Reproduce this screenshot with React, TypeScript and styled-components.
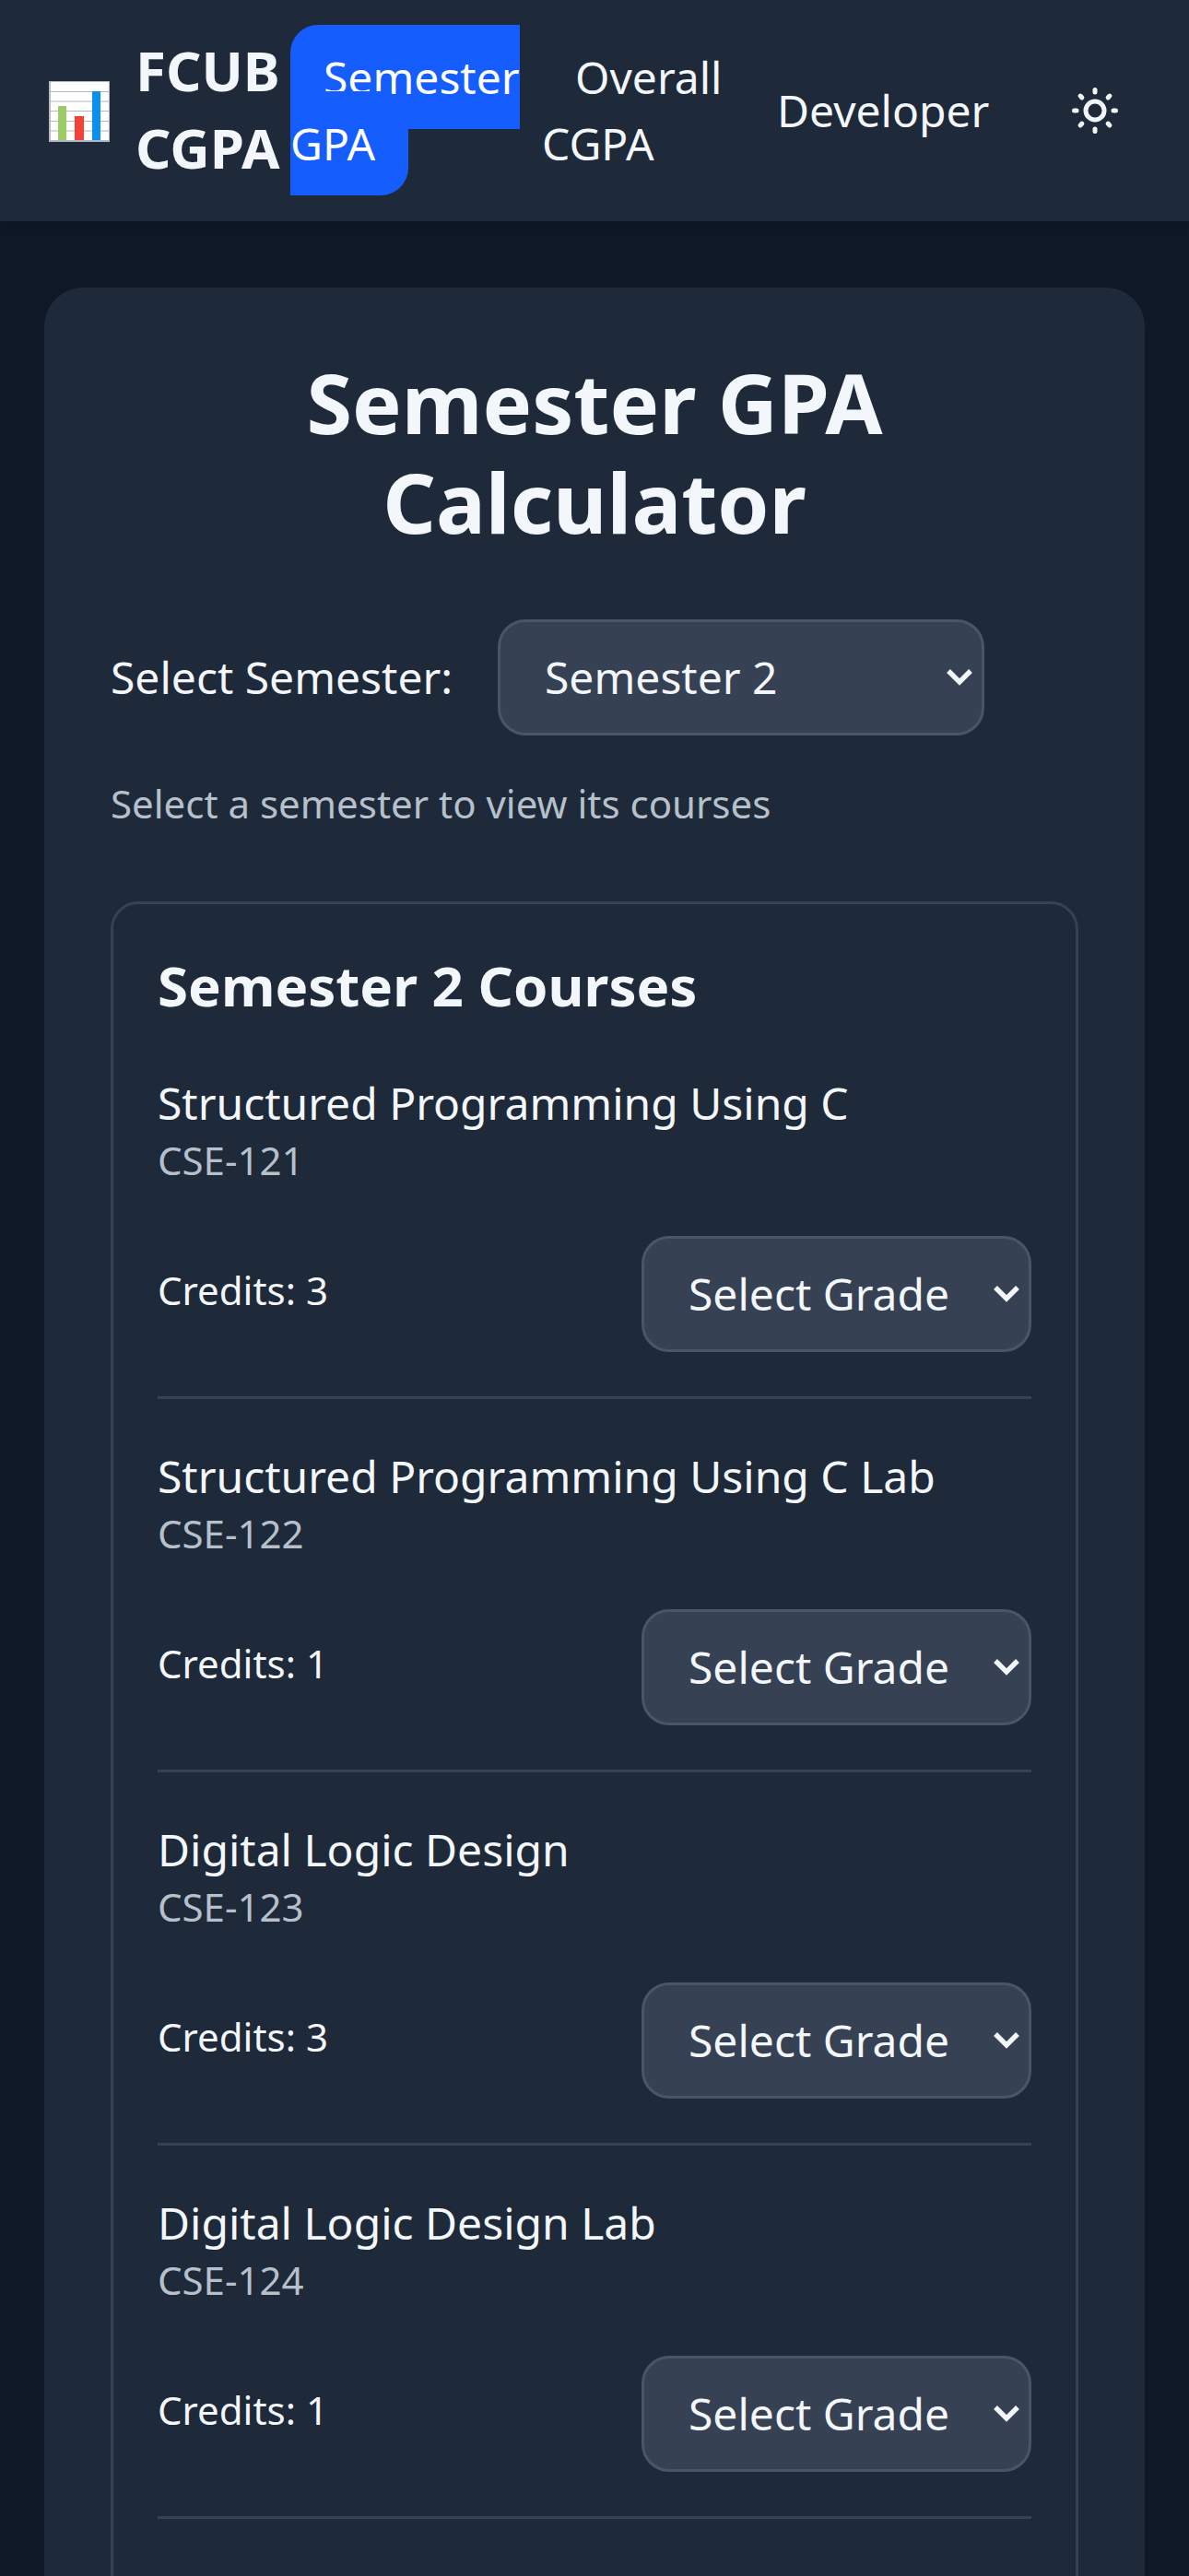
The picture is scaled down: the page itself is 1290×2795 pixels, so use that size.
import React, { useState } from "react";
import styled, { createGlobalStyle } from "styled-components";

const GlobalStyle = createGlobalStyle`
  *, *::before, *::after { box-sizing: border-box; }
  html, body { margin: 0; padding: 0; background: #0e1826; }
  body {
    font-family: "Noto Sans", "Open Sans", sans-serif;
    font-size: 48px;
    line-height: 72px;
    color: #f3f6fa;
  }
  h1, h2, p, ul { margin: 0; padding: 0; }
`;

const Page = styled.div`
  height: 2795px;
  overflow: hidden;
`;

const Header = styled.header`
  display: flex;
  align-items: center;
  justify-content: space-between;
  height: 240px;
  padding: 0 48px;
  background: #1e2939;
  box-shadow: 0 3px 9px rgba(0, 0, 0, 0.1);
`;

const Brand = styled.div`
  display: flex;
  align-items: center;
  width: 267px;
`;

const Logo = styled.svg`
  flex: none;
  width: 66px;
  height: 66px;
  margin: 2px 28px 0 5px;
`;

const BrandName = styled.span`
  width: 168px;
  padding-bottom: 4px;
  font-size: 60px;
  line-height: 84px;
  font-weight: 700;
`;

const Nav = styled.nav`
  display: flex;
  align-items: center;
  justify-content: space-between;
  flex: 1;
`;

const NavList = styled.ul`
  display: flex;
  align-items: center;
  gap: 24px;
  list-style: none;
`;

const NavItem = styled.li<{ $width: number }>`
  width: ${(p) => p.$width}px;
`;

const NavLink = styled.a<{ $active?: boolean }>`
  padding: 24px 36px;
  border-radius: 30px;
  color: ${(p) => (p.$active ? "#ffffff" : "inherit")};
  background: ${(p) => (p.$active ? "#155dfc" : "transparent")};
  text-decoration: none;
`;

const ThemeButton = styled.button`
  display: flex;
  padding: 24px;
  border: 0;
  background: none;
  color: inherit;
`;

const Card = styled.main`
  margin: 72px 48px 0;
  padding: 70px 72px 72px;
  border-radius: 42px;
  background: #1e2939;
`;

const Title = styled.h1`
  margin-bottom: 74px;
  font-size: 90px;
  line-height: 108px;
  font-weight: 700;
  text-align: center;
`;

const SemesterRow = styled.div`
  display: flex;
  align-items: center;
  gap: 48px;
`;

const Label = styled.label`
  width: 372px;
  white-space: nowrap;
`;

const SelectBox = styled.button<{ $width: number }>`
  display: flex;
  align-items: center;
  justify-content: space-between;
  width: ${(p) => p.$width}px;
  height: 126px;
  padding: 0 10px 0 48px;
  border: 3px solid #4a5565;
  border-radius: 30px;
  background: #364153;
  color: inherit;
  font: inherit;
  white-space: nowrap;
`;

const Small = styled.p<{ $muted?: boolean }>`
  padding-bottom: 8px;
  font-size: 42px;
  line-height: 52px;
  color: ${(p) => (p.$muted ? "#b6c0cb" : "inherit")};
`;

const Hint = styled(Small)`
  margin: 48px 0 72px;
  padding-bottom: 8px;
`;

const Courses = styled.section`
  min-height: 2000px;
  padding: 46px 48px 48px;
  border: 3px solid #364153;
  border-radius: 30px;
`;

const CoursesTitle = styled.h2`
  padding-bottom: 2px;
  font-size: 60px;
  line-height: 84px;
  font-weight: 700;
`;

const Course = styled.article`
  padding: 48px 0;
  border-bottom: 3px solid #364153;
`;

const CourseName = styled.p`
  white-space: nowrap;
`;

const CourseFooter = styled.div`
  display: flex;
  align-items: center;
  justify-content: space-between;
  margin-top: 48px;
`;

const ChartIcon = () => (
  <Logo viewBox="0 0 66 66">
    <rect width="66" height="66" fill="#b0b8c3" />
    <rect x="2" y="1" width="63" height="63" fill="#fff" />
    <path d="M2 11.5H65M2 22H65M2 32.5H65M2 43.5H65M2 54H65" stroke="#b0b8c3" strokeWidth="1.2" />
    <rect x="10" y="27" width="9" height="37" fill="#9ccc65" />
    <rect x="28" y="38" width="10" height="26" fill="#f44336" />
    <rect x="47" y="11" width="9" height="53" fill="#0a91ee" />
  </Logo>
);

const SunIcon = () => (
  <svg width="60" height="60" viewBox="0 0 24 24" fill="none" stroke="currentColor" strokeWidth="2" strokeLinecap="round">
    <path d="M12 3v1m0 16v1m9-9h-1M4 12H3m15.364 6.364l-.707-.707M6.343 6.343l-.707-.707m12.728 0l-.707.707M6.343 17.657l-.707.707M16 12a4 4 0 11-8 0 4 4 0 018 0z" />
  </svg>
);

const Chevron = () => (
  <svg width="28" height="18" viewBox="0 0 28 18" fill="none" stroke="currentColor" strokeWidth="5.4">
    <path d="M2 2L14 14L26 2" />
  </svg>
);

const courses = [
  { name: "Structured Programming Using C", code: "CSE-121", credits: 3 },
  { name: "Structured Programming Using C Lab", code: "CSE-122", credits: 1 },
  { name: "Digital Logic Design", code: "CSE-123", credits: 3 },
  { name: "Digital Logic Design Lab", code: "CSE-124", credits: 1 },
];

export default function App() {
  const [semester] = useState(2);
  return (
    <Page>
      <GlobalStyle />
      <Header>
        <Brand>
          <ChartIcon />
          <BrandName>FCUB CGPA</BrandName>
        </Brand>
        <Nav>
          <NavList>
            <NavItem $width={249}><NavLink $active>Semester GPA</NavLink></NavItem>
            <NavItem $width={195}><NavLink>Overall CGPA</NavLink></NavItem>
            <NavItem $width={302}><NavLink>Developer</NavLink></NavItem>
          </NavList>
          <ThemeButton aria-label="Toggle theme"><SunIcon /></ThemeButton>
        </Nav>
      </Header>
      <Card>
        <Title>Semester GPA Calculator</Title>
        <SemesterRow>
          <Label>Select Semester:</Label>
          <SelectBox $width={528}>Semester {semester}<Chevron /></SelectBox>
        </SemesterRow>
        <Hint $muted>Select a semester to view its courses</Hint>
        <Courses>
          <CoursesTitle>Semester {semester} Courses</CoursesTitle>
          {courses.map((c) => (
            <Course key={c.code}>
              <CourseName>{c.name}</CourseName>
              <Small $muted>{c.code}</Small>
              <CourseFooter>
                <Small>Credits: {c.credits}</Small>
                <SelectBox $width={423}>Select Grade<Chevron /></SelectBox>
              </CourseFooter>
            </Course>
          ))}
        </Courses>
      </Card>
    </Page>
  );
}
